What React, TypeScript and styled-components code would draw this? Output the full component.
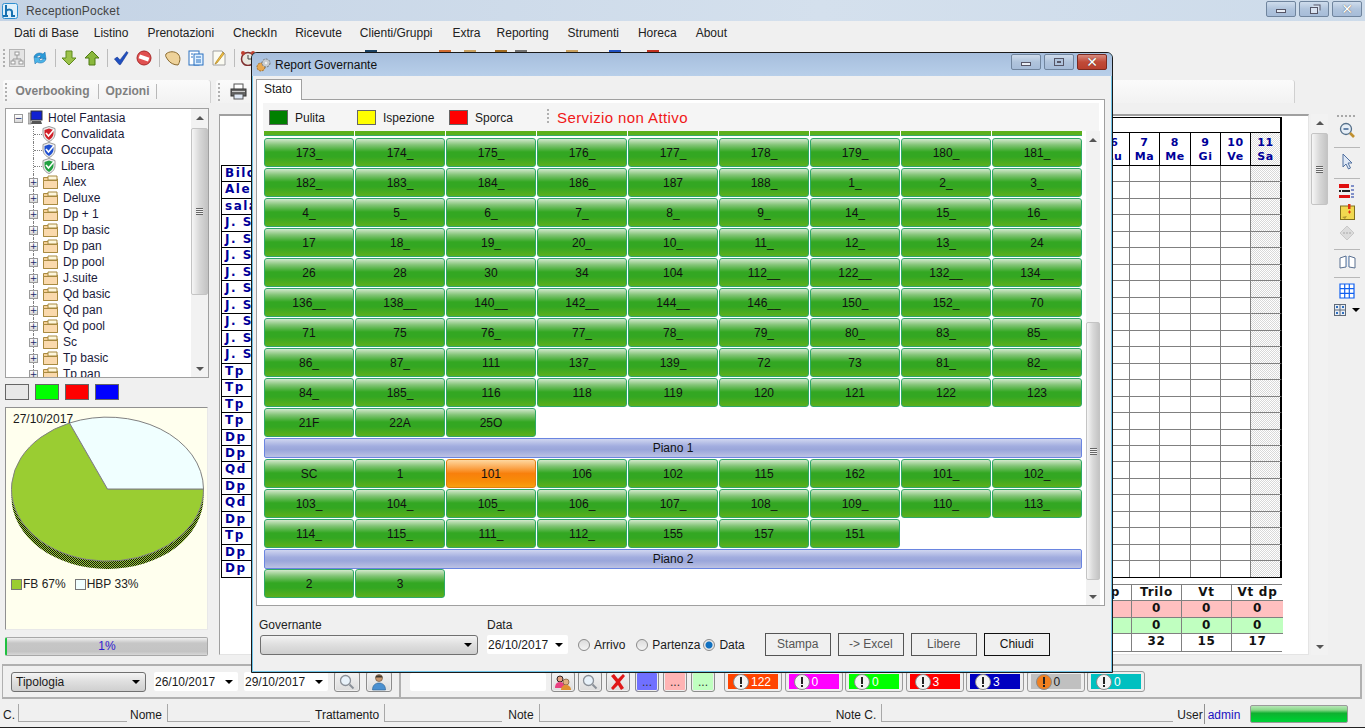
import styled, { createGlobalStyle } from 'styled-components';

const GlobalStyle = createGlobalStyle`
  html, body {
    margin: 0;
    padding: 0;
    overflow: hidden;
    background: #f0f0f0;
  }
  * {
    box-sizing: border-box;
  }
`;

const MENU = [
  { label: 'Dati di Base', trim: 4 },
  { label: 'Listino', trim: 0 },
  { label: 'Prenotazioni', trim: 0 },
  { label: 'CheckIn', trim: 1 },
  { label: 'Ricevute', trim: 1 },
  { label: 'Clienti/Gruppi', trim: -1 },
  { label: 'Extra', trim: 3 },
  { label: 'Reporting', trim: 0 },
  { label: 'Strumenti', trim: 0 },
  { label: 'Horeca', trim: 0 },
  { label: 'About', trim: 0 },
];
const FOLDERS = ['Alex', 'Deluxe', 'Dp + 1', 'Dp basic', 'Dp pan', 'Dp pool', 'J.suite', 'Qd basic', 'Qd pan', 'Qd pool', 'Sc', 'Tp basic', 'Tp pan'];
const NAMES = ['Bilo', 'Alex', 'sala', 'J. S', 'J. S', 'J. S', 'J. S', 'J. S', 'J. S', 'J. S', 'J. S', 'J. S', 'Tp', 'Tp', 'Tp', 'Tp', 'Dp', 'Dp', 'Qd', 'Dp', 'Qd', 'Dp', 'Tp', 'Dp', 'Dp'];
const DAYS = [['6', 'Lu'], ['7', 'Ma'], ['8', 'Me'], ['9', 'Gi'], ['10', 'Ve'], ['11', 'Sa']];
const HIDDEN_TOOLS = [
  { gap: 102, color: '#1a4060' },
  { gap: 55, color: '#d06a30' },
  { gap: 6, color: '#c8a060' },
  { gap: 12, color: '#a06a20' },
  { gap: 1, color: '#707070' },
  { gap: 32, color: '#c8a060' },
  { gap: 24, color: '#2050c0' },
  { gap: 19, color: '#c03020' },
];
const BADGES = [
  { color: '#ff4500', text: '#fff', label: '122' },
  { color: '#ff00ff', text: '#fff', label: '0' },
  { color: '#00ff00', text: '#fff', label: '0' },
  { color: '#ff0000', text: '#fff', label: '3' },
  { color: '#0000c0', text: '#fff', label: '3' },
  { color: '#c0c0c0', text: '#222', label: '0', warn: true },
  { color: '#00c0c0', text: '#fff', label: '0' },
];

type RoomRow = { floor: string } | { rooms: string[] };

const ROOM_ROWS: RoomRow[] = [
  { rooms: '173_ 174_ 175_ 176_ 177_ 178_ 179_ 180_ 181_'.split(' ') },
  { rooms: '182_ 183_ 184_ 186_ 187 188_ 1_ 2_ 3_'.split(' ') },
  { rooms: '4_ 5_ 6_ 7_ 8_ 9_ 14_ 15_ 16_'.split(' ') },
  { rooms: '17 18_ 19_ 20_ 10_ 11_ 12_ 13_ 24'.split(' ') },
  { rooms: '26 28 30 34 104 112__ 122__ 132__ 134__'.split(' ') },
  { rooms: '136__ 138__ 140__ 142__ 144__ 146__ 150_ 152_ 70'.split(' ') },
  { rooms: '71 75 76_ 77_ 78_ 79_ 80_ 83_ 85_'.split(' ') },
  { rooms: '86_ 87_ 111 137_ 139_ 72 73 81_ 82_'.split(' ') },
  { rooms: '84_ 185_ 116 118 119 120 121 122 123'.split(' ') },
  { rooms: '21F 22A 25O'.split(' ') },
  { floor: 'Piano 1' },
  { rooms: 'SC 1 101 106 102 115 162 101_ 102_'.split(' ') },
  { rooms: '103_ 104_ 105_ 106_ 107_ 108_ 109_ 110_ 113_'.split(' ') },
  { rooms: '114_ 115_ 111_ 112_ 155 157 151'.split(' ') },
  { floor: 'Piano 2' },
  { rooms: ['2', '3'] },
];

// ---- drawn icons ----

const Logo = () => (
  <svg width="16" height="16" viewBox="0 0 16 16">
    <rect x="0.5" y="0.5" width="15" height="15" rx="2" fill="#dff0fb" stroke="#2f8fd0" />
    <path d="M4 2v11M1 13h5M4 8c2-2 6-2 6 1v4h3" fill="none" stroke="#1670b0" strokeWidth="2" />
  </svg>
);

const NetIcon = () => (
  <svg width="16" height="18" viewBox="0 0 16 18">
    <rect x="0.5" y="0.5" width="15" height="17" fill="#e4e4e4" stroke="#b4b4b4" />
    <path d="M8 6v4M4 13v-3h8v3" fill="none" stroke="#999" />
    <rect x="6" y="3" width="4" height="3" fill="#fff" stroke="#999" />
    <rect x="2" y="12" width="4" height="3" fill="#fff" stroke="#999" />
    <rect x="10" y="12" width="4" height="3" fill="#fff" stroke="#999" />
  </svg>
);

const RefreshIcon = () => (
  <svg width="16" height="18" viewBox="0 0 16 18">
    <path d="M2 8c1-4 6-5 9-3l2-2 1 7-7-1 2-2c-2-1-4 0-5 2z" fill="#2a9ad8" stroke="#1a6aa8" strokeWidth="0.5" />
    <path d="M14 10c-1 4-6 5-9 3l-2 2-1-7 7 1-2 2c2 1 4 0 5-2z" fill="#4ab4e8" stroke="#1a6aa8" strokeWidth="0.5" />
  </svg>
);

const DownIcon = () => (
  <svg width="16" height="16" viewBox="0 0 16 16">
    <path d="M5 1h6v7h4l-7 7-7-7h4z" fill="#9cc24a" stroke="#5f8a1c" />
  </svg>
);

const UpIcon = () => (
  <svg width="16" height="16" viewBox="0 0 16 16">
    <path d="M8 1l7 7h-4v7H5V8H1z" fill="#8ab83c" stroke="#4f7a14" />
  </svg>
);

const CheckIcon = () => (
  <svg width="17" height="16" viewBox="0 0 17 16">
    <path d="M1.5 9l3-2 3 3 7-9 1.500 1.500L8 15H6.500z" fill="#1f4fc0" stroke="#123088" strokeWidth="0.6" />
  </svg>
);

const NoIcon = () => (
  <svg width="16" height="16" viewBox="0 0 16 16">
    <circle cx="8" cy="8" r="7" fill="#e05050" stroke="#a82828" />
    <rect x="3" y="6" width="10" height="4" fill="#fff" transform="rotate(20 8 8)" />
  </svg>
);

const LeafIcon = () => (
  <svg width="16" height="16" viewBox="0 0 16 16">
    <path d="M1 4c3-3 9-3 12 0s2 8 0 11c-4 0-8-2-10-5S0 6 1 4z" fill="#eed29a" stroke="#8a6a30" />
  </svg>
);

const DocsIcon = () => (
  <svg width="16" height="16" viewBox="0 0 16 16">
    <rect x="1" y="1" width="10" height="14" fill="#fff" stroke="#2a70c0" />
    <rect x="6" y="4" width="9" height="11" fill="#dff0ff" stroke="#2a70c0" />
    <path d="M3 4h2M3 7h2M8 7h5M8 10h5M8 12h5" stroke="#2a70c0" />
  </svg>
);

const NoteIcon = () => (
  <svg width="16" height="16" viewBox="0 0 16 16">
    <path d="M2 1h9l3 3v11H2z" fill="#fbfbf2" stroke="#a0a0a0" />
    <path d="M12 2L5 12l-1 2 2-1L13 4z" fill="#f0c040" stroke="#a07010" strokeWidth="0.6" />
  </svg>
);

const ClockIcon = () => (
  <svg width="16" height="16" viewBox="0 0 16 16">
    <circle cx="8" cy="9" r="6.500" fill="#e8e8e0" stroke="#803030" strokeWidth="1.5" />
    <path d="M8 5v4h3" fill="none" stroke="#444" />
    <circle cx="3" cy="3" r="2" fill="#c04030" />
    <circle cx="13" cy="3" r="2" fill="#c04030" />
  </svg>
);

const PrintIcon = () => (
  <svg width="17" height="17" viewBox="0 0 17 17">
    <rect x="4" y="1" width="9" height="6" fill="#fff" stroke="#555" />
    <rect x="1" y="6" width="15" height="7" fill="#666" stroke="#333" />
    <rect x="4" y="11" width="9" height="5" fill="#dfe8f5" stroke="#555" />
    <rect x="2" y="8" width="13" height="1" fill="#ccc" />
  </svg>
);

const MagnifierIcon = () => (
  <svg width="16" height="16" viewBox="0 0 16 16">
    <circle cx="6.500" cy="6.500" r="5" fill="#e8f2fa" stroke="#8a9098" strokeWidth="1.3" />
    <path d="M10.500 10.500l4 4" stroke="#8a9098" strokeWidth="2" />
  </svg>
);

const ZoomOutIcon = () => (
  <svg width="17" height="17" viewBox="0 0 17 17">
    <circle cx="7" cy="7" r="5.500" fill="#e6eef6" stroke="#55708a" strokeWidth="1.3" />
    <path d="M4.500 7h5" stroke="#3a6090" strokeWidth="1.5" />
    <path d="M11 11l4 4" stroke="#c09030" strokeWidth="2.6" />
  </svg>
);

const PointerIcon = () => (
  <svg width="16" height="17" viewBox="0 0 16 17">
    <path d="M4 1l9 9H9l2.500 5-2 1-2.500-5-3 3z" fill="#dfe8f5" stroke="#5070a0" />
  </svg>
);

const ListIcon = () => (
  <svg width="16" height="15" viewBox="0 0 16 15">
    <rect x="0" y="0" width="10" height="4" fill="#e01010" />
    <rect x="0" y="6" width="2" height="2" fill="#222" />
    <rect x="3" y="6" width="8" height="2" fill="#222" />
    <rect x="0" y="11" width="11" height="3" fill="#e01010" />
    <path d="M12 2h3M12 6h3M12 10h3M12 13h3" stroke="#1030a0" />
  </svg>
);

const StickyIcon = () => (
  <svg width="15" height="16" viewBox="0 0 15 16">
    <rect x="0.5" y="2" width="14" height="13.500" fill="#f0d850" stroke="#807020" />
    <path d="M2 13l5-1-2 3z" fill="#b09830" />
    <rect x="8" y="0" width="2.500" height="5" fill="#e03010" />
    <path d="M8 8h3M9.500 6.500v3" stroke="#e03010" />
  </svg>
);

const DiamondIcon = () => (
  <svg width="16" height="16" viewBox="0 0 16 16">
    <path d="M8 1l7 7-7 7-7-7z" fill="#dcdcdc" stroke="#c8c8c8" />
    <path d="M4 8h8" stroke="#a8a8a8" strokeDasharray="2 1" />
  </svg>
);

const BookIcon = () => (
  <svg width="17" height="14" viewBox="0 0 17 14">
    <path d="M1 3l6-2v11l-6 1zM10 1l6 2v10l-6-1z" fill="#fff" stroke="#5a7090" />
    <path d="M7 1h1v11H7zM9 1h1v11H9z" fill="#90a8c8" />
  </svg>
);

const BlueGridIcon = () => (
  <svg width="16" height="16" viewBox="0 0 16 16">
    <path d="M1 1h14v14H1zM1 5.700h14M1 10.300h14M5.700 1v14M10.300 1v14" fill="#fff" stroke="#1060f0" strokeWidth="1.2" />
  </svg>
);

const SmallGridIcon = () => (
  <svg width="12" height="12" viewBox="0 0 12 12">
    <rect x="0.5" y="0.5" width="11" height="11" fill="#e8eef6" stroke="#606a78" />
    <path d="M6 0v12M0 6h12" stroke="#606a78" />
    <rect x="2" y="2" width="2" height="2" fill="#3070c0" />
    <rect x="8" y="2" width="2" height="2" fill="#3070c0" />
    <rect x="2" y="8" width="2" height="2" fill="#3070c0" />
    <rect x="8" y="8" width="2" height="2" fill="#3070c0" />
  </svg>
);

const ShieldIcon = ({ color }: { color: string }) => (
  <svg width="14" height="16" viewBox="0 0 14 16">
    <path d="M7 .5l6 2v5c0 4-3 7-6 8-3-1-6-4-6-8v-5z" fill="#eee" stroke="#999" />
    <path d="M7 2.500l4.500 1.500v3.500c0 3-2 5-4.500 6.500-2.500-1.500-4.500-3.500-4.500-6.500V4z" fill={color} />
    <path d="M4 7l2.500 3L12 3.500" fill="none" stroke="#fff" strokeWidth="1.600" />
  </svg>
);

const FolderIcon = () => (
  <svg width="15" height="14" viewBox="0 0 15 14">
    <path d="M.5 2.500h5l1 1.500h8v9.500H.5z" fill="#f6cf96" stroke="#a88a40" />
    <path d="M5 1h9v4H5z" fill="#fdf6dc" stroke="#a88a40" />
    <path d="M.5 5.500h14v8H.5z" fill="#fad9ac" stroke="#a88a40" />
  </svg>
);

const MonitorIcon = () => (
  <svg width="15" height="16" viewBox="0 0 15 16">
    <rect x="0" y="3" width="3" height="11" fill="#c0c0c0" stroke="#707070" strokeWidth="0.6" />
    <rect x="3" y="1" width="11" height="9" fill="#1020d0" stroke="#333" />
    <path d="M4 11h9l1 3H3z" fill="#555" />
  </svg>
);

const GearsIcon = () => (
  <svg width="15" height="14" viewBox="0 0 15 14">
    <circle cx="5" cy="9" r="4" fill="#e8a850" stroke="#a07030" strokeDasharray="2 1" />
    <circle cx="10" cy="5" r="4" fill="#c8ccd0" stroke="#707880" strokeDasharray="2 1" />
    <circle cx="10" cy="5" r="1.200" fill="#f0f0f0" />
  </svg>
);

const PersonIcon = () => (
  <svg width="16" height="18" viewBox="0 0 16 18">
    <circle cx="8" cy="5" r="3.500" fill="#c89870" stroke="#604830" strokeWidth="0.6" />
    <path d="M4.500 4.500c0-3 7-3 7 0z" fill="#40382c" />
    <path d="M1.500 17c0-5 3-7 6.500-7s6.500 2 6.500 7z" fill="#4a90d0" stroke="#2a6090" strokeWidth="0.6" />
  </svg>
);

const PeopleIcon = () => (
  <svg width="18" height="18" viewBox="0 0 18 18">
    <circle cx="6" cy="6" r="3" fill="#e0a080" stroke="#302020" />
    <path d="M1 15c0-4 2-6 5-6s5 2 5 6z" fill="#e84080" />
    <circle cx="12" cy="9" r="3" fill="#e0b080" stroke="#604020" strokeWidth="0.6" />
    <path d="M7 17c0-3 2-5 5-5s5 2 5 5z" fill="#e09030" />
  </svg>
);

const CrossIcon = () => (
  <svg width="18" height="18" viewBox="0 0 18 18">
    <path d="M2 3l3-2 4 5 5-5 2 2-5 6 4 6-3 2-3-5-5 5-2-2 5-6z" fill="#e01818" />
  </svg>
);

const AlertIcon = ({ warn }: { warn?: boolean }) => (
  <svg width="16" height="16" viewBox="0 0 16 16">
    <circle cx="8" cy="8" r="7.500" fill={warn ? '#f08020' : '#f4f4f4'} stroke="#8a8a8a" />
    <rect x="7" y="3" width="2" height="7" fill="#222" />
    <rect x="7" y="11" width="2" height="2" fill="#222" />
  </svg>
);

const Caret = styled.span`
  width: 0;
  height: 0;
  border-left: 4px solid transparent;
  border-right: 4px solid transparent;
  border-top: 4px solid #000;
  flex: none;
`;

// ---- window frame ----

const Page = styled.div`
  position: relative;
  width: 1365px;
  height: 728px;
  overflow: hidden;
  display: flex;
  flex-direction: column;
  background: #f0f0f0;
  color: #1a1a1a;
  font: 12px 'Liberation Sans', Arial, sans-serif;
`;

const TitleBar = styled.div`
  height: 21px;
  flex: none;
  display: flex;
  align-items: center;
  padding: 0 3px 0 2px;
  background: linear-gradient(90deg, #c4d3e5 0%, #d4e0ed 60%, #cddbea 100%);
`;

const AppTitle = styled.span`
  margin-left: 8px;
  font-size: 12px;
  color: #444;
  letter-spacing: 0.2px;
  flex: 1;
`;

const WindowButtons = styled.div`
  display: flex;
  gap: 3px;
  align-self: flex-start;
  margin-top: 1px;
`;

const WindowButton = styled.div<{ $close?: boolean }>`
  width: 30px;
  height: 16px;
  border-radius: 2px;
  border: 1px solid ${(p) => (p.$close ? '#7a2a20' : '#70859e')};
  background: ${(p) =>
    p.$close ? 'linear-gradient(#d88a7e, #c04a38 50%, #b8402e)' : 'linear-gradient(#cfdcec, #b0c4dc 50%, #a6bcd8)'};
  display: flex;
  align-items: center;
  justify-content: center;
`;

const MinGlyph = styled.span`
  width: 10px;
  height: 4px;
  margin-top: 4px;
  background: #e8eef6;
  border: 1px solid #556;
`;

const MaxGlyph = styled.span`
  width: 10px;
  height: 8px;
  background: #c0d0e4;
  border: 1px solid #556;
  box-shadow: inset 0 0 0 2px #b0c4dc, inset 0 0 0 3px #556;
`;

const RestoreGlyph = styled.span`
  width: 8px;
  height: 7px;
  margin-top: 2px;
  background: #d8e2f0;
  border: 1px solid #556;
  box-shadow: 2px -2px 0 -0.5px #d8e2f0, 3px -3px 0 -0.5px #556;
`;

const CloseGlyph = styled.span`
  color: #fff;
  font: bold 14px/14px 'DejaVu Sans', sans-serif;
  text-shadow: 0 0 1px #333;
`;

const MenuBar = styled.nav`
  height: 24px;
  flex: none;
  display: flex;
  align-items: center;
  padding-left: 14px;
  gap: 19px;
  font-size: 12px;
`;

const MenuItem = styled.span<{ $trim: number }>`
  color: #222;
  margin-right: ${(p) => -p.$trim}px;
`;

const Toolbar = styled.div`
  height: 25px;
  flex: none;
  display: flex;
  align-items: center;
  gap: 7px;
  padding-left: 3px;
`;

const Grip = styled.span`
  width: 2px;
  height: 18px;
  flex: none;
  background: repeating-linear-gradient(#b0b0b0 0 2px, transparent 2px 4px);
`;

const ToolbarGrip = styled(Grip)`
  margin-right: -3px;
`;

const ToolIcon = styled.span`
  width: 16px;
  height: 18px;
  flex: none;
  display: flex;
  align-items: center;
  justify-content: center;
`;

const ToolSeparator = styled.span`
  width: 1px;
  height: 18px;
  flex: none;
  background: #bcbcbc;
  margin-right: -2px;
`;

const ToolChip = styled.span<{ $gap: number; $color: string }>`
  width: 12px;
  height: 16px;
  flex: none;
  margin-left: ${(p) => p.$gap}px;
  background: ${(p) => p.$color};
`;

const MainRow = styled.div`
  flex: none;
  height: 576px;
  margin-top: 10px;
  display: flex;
`;

// ---- left column ----

const LeftColumn = styled.aside`
  width: 216px;
  flex: none;
  padding-left: 3px;
  display: flex;
  flex-direction: column;
`;

const Strip = styled.div<{ $width: number }>`
  width: ${(p) => p.$width}px;
  height: 23px;
  flex: none;
  border-radius: 3px 3px 0 0;
  background: linear-gradient(#fbfbfb, #f2f2f2);
  border-right: 1px solid #d0d0d0;
  display: flex;
  align-items: center;
  padding-left: 2px;
`;

const StripTab = styled.span<{ $width: number }>`
  width: ${(p) => p.$width}px;
  height: 15px;
  line-height: 15px;
  border-right: 1px solid #b8b8b8;
  text-align: center;
  font-weight: bold;
  color: #808080;
`;

const TreeBox = styled.div`
  margin: 5px 0 0 2px;
  width: 204px;
  height: 270px;
  flex: none;
  display: flex;
  background: #fff;
  border: 1px solid #a0a0a0;
`;

const TreeList = styled.div`
  flex: 1;
  overflow: hidden;
  padding-top: 1px;
`;

const TreeRow = styled.div<{ $indent: number; $line?: boolean }>`
  position: relative;
  height: 16px;
  flex: none;
  display: flex;
  align-items: center;
  gap: 5px;
  padding-left: ${(p) => p.$indent}px;
  &::before {
    content: '';
    display: ${(p) => (p.$line ? 'block' : 'none')};
    position: absolute;
    left: 27px;
    top: 0;
    height: 16px;
    border-left: 1px dotted #808080;
  }
`;

const TreeLabel = styled.span`
  color: #1a1a3a;
`;

const Expander = styled.span`
  position: relative;
  z-index: 1;
  width: 9px;
  height: 9px;
  flex: none;
  border: 1px solid #9a9a9a;
  background: linear-gradient(#fff, #d8d8d8);
  display: flex;
  align-items: center;
  justify-content: center;
  font: 9px/7px 'DejaVu Sans', sans-serif;
  color: #1a2a6a;
`;

const TreeLeader = styled.span`
  width: 8px;
  margin-right: -5px;
  border-top: 1px dotted #808080;
  flex: none;
`;

const Swatches = styled.div`
  display: flex;
  gap: 6px;
  margin: 6px 0 0 2px;
`;

const Swatch = styled.span<{ $color: string }>`
  width: 24px;
  height: 16px;
  border: 1px solid #666;
  background: ${(p) => p.$color};
`;

const ChartBox = styled.div`
  position: relative;
  margin: 7px 0 0 2px;
  width: 203px;
  height: 223px;
  flex: none;
  background: #ffffee;
  border: 1px solid;
  border-color: #909090 #e8e8e8 #e8e8e8 #909090;
`;

const ChartDate = styled.span`
  position: absolute;
  left: 7px;
  top: 4px;
`;

const ChartSvg = styled.svg`
  display: block;
`;

const ChartLegend = styled.div`
  display: flex;
  align-items: center;
  margin: -1px 0 0 5px;
  color: #222;
`;

const LegendSwatch = styled.span<{ $color: string }>`
  width: 11px;
  height: 11px;
  margin-right: 1px;
  border: 1px solid #777;
  background: ${(p) => p.$color};
`;

const LegendText = styled.span`
  margin-right: 9px;
`;

const Progress = styled.div`
  position: relative;
  margin: 7px 0 0 2px;
  width: 203px;
  height: 19px;
  flex: none;
  border: 1px solid #a8a8a8;
  border-left: 2px solid #20c040;
  border-radius: 2px;
  background: linear-gradient(#f0f0f0, #c6c6c6 30%, #c4c4c4 80%, #d8d8d8);
  color: #3020d0;
  text-align: center;
  line-height: 17px;
`;

// ---- centre ----

const CenterColumn = styled.main`
  width: 1112px;
  flex: none;
  display: flex;
  flex-direction: column;
`;

const PrintIconSlot = styled.span`
  display: flex;
  align-items: center;
  margin-left: 10px;
`;

const ContentFrame = styled.div`
  margin: 11px 0 0 3px;
  height: 541px;
  flex: none;
  display: flex;
  gap: 2px;
`;

const SheetPanel = styled.div`
  flex: 1;
  background: #fff;
  border: 1px solid;
  border-width: 2px 1px 1px 1px;
  border-color: #a0a0a0 #e4e4e4 #e4e4e4 #a0a0a0;
  padding: 1px 0 0 1px;
`;

const SheetGrid = styled.div`
  width: 1061px;
  display: grid;
  grid-template-columns: 1fr 30px 30px 31px 30px 30px 31px;
  grid-template-rows: 16px 33px repeat(25, 16.48px);
  font: bold 11px 'DejaVu Sans', sans-serif;
  letter-spacing: 0.6px;
  color: #000099;
`;

const CornerCell = styled.div`
  grid-row: 1 / 3;
  border-bottom: 1px solid #000;
`;

const BandCell = styled.div`
  grid-column: 2 / -1;
  border: 1px solid #000;
  border-right: 2px solid #000;
`;

const DayHead = styled.div<{ $weekend?: boolean; $last?: boolean }>`
  border-right: 1px solid #000;
  border-right-width: ${(p) => (p.$last ? 2 : 1)}px;
  border-bottom: 1px solid #000;
  text-align: center;
  line-height: 14px;
  padding-top: 3px;
  background: ${(p) => (p.$weekend ? 'repeating-conic-gradient(#dcdcdc 0 25%, #fff 0 50%) 0 0 / 2px 2px' : '#fff')};
`;

const NameCell = styled.div`
  border: 1px solid #000;
  border-top: 0;
  padding-left: 3px;
  font-size: 12px;
  letter-spacing: 1.5px;
  line-height: 15px;
  white-space: nowrap;
`;

const DayCell = styled.div<{ $weekend?: boolean; $last?: boolean }>`
  border-right: ${(p) => (p.$last ? '2px solid #000' : '1px solid #808080')};
  border-bottom: 1px solid #808080;
  background: ${(p) => (p.$weekend ? 'repeating-conic-gradient(#d8d8d8 0 25%, #fff 0 50%) 0 0 / 2px 2px' : '#fff')};
`;

const SheetClose = styled.div`
  width: 1061px;
  height: 1px;
  margin-top: -1px;
  background: #000;
  position: relative;
`;

const Summary = styled.div`
  width: 241px;
  margin: 6px 0 0 820px;
  display: grid;
  grid-template-columns: 90px 50px 50px 51px;
  grid-auto-rows: 16.500px;
  border: 1px solid #808080;
  font: bold 12px 'DejaVu Sans', sans-serif;
  letter-spacing: 0.7px;
  color: #111;
`;

const SummaryCell = styled.div<{ $bg?: string }>`
  background: ${(p) => p.$bg || '#fff'};
  border-right: 1px solid #808080;
  border-bottom: 1px solid #808080;
  text-align: center;
  line-height: 15px;
  &:first-child {
    text-align: right;
    padding-right: 11px;
  }
  &:nth-child(4n) {
    border-right: 0;
  }
  &:nth-last-child(-n + 4) {
    border-bottom: 0;
  }
`;

const ScrollTrack = styled.div<{ $width: number }>`
  width: ${(p) => p.$width}px;
  flex: none;
  display: flex;
  flex-direction: column;
  align-items: stretch;
  background: #f2f2f2;
`;

const ScrollArrow = styled.div<{ $down?: boolean }>`
  height: 17px;
  flex: none;
  display: flex;
  align-items: center;
  justify-content: center;
  &::after {
    content: '';
    width: 0;
    height: 0;
    border-left: 4px solid transparent;
    border-right: 4px solid transparent;
    ${(p) => (p.$down ? 'border-top: 4px solid #555;' : 'border-bottom: 4px solid #555;')}
  }
`;

const ScrollThumb = styled.div<{ $offset: number; $height: number }>`
  margin-top: ${(p) => p.$offset}px;
  height: ${(p) => p.$height}px;
  flex: none;
  border: 1px solid #c4c4c4;
  border-radius: 2px;
  background: linear-gradient(90deg, #f6f6f6, #d8d8d8 50%, #c4c4c4);
  display: flex;
  align-items: center;
  justify-content: center;
  &::after {
    content: '';
    width: 7px;
    height: 7px;
    background: repeating-linear-gradient(#666 0 1px, #f0f0f0 1px 2px);
  }
`;

const ScrollFill = styled.div`
  flex: 1;
`;

const Scrollbar = ({ width, offset, height }: { width: number; offset: number; height: number }) => (
  <ScrollTrack $width={width}>
    <ScrollArrow />
    <ScrollThumb $offset={offset} $height={height} />
    <ScrollFill />
    <ScrollArrow $down />
  </ScrollTrack>
);

// ---- right toolbar ----

const SideBar = styled.div`
  margin: 35px 0 0 4px;
  width: 30px;
  flex: none;
  display: flex;
  flex-direction: column;
  align-items: center;
  gap: 5px;
`;

const SideDots = styled.span`
  width: 20px;
  height: 2px;
  background: repeating-linear-gradient(90deg, #a8a8a8 0 2px, transparent 2px 4px);
`;

const SideSlot = styled.span`
  display: flex;
  align-items: center;
  gap: 6px;
`;

const SideSeparator = styled.span`
  width: 26px;
  height: 1px;
  margin-top: 3px;
  background: #b8b8b8;
`;

// ---- bottom bars ----

const BottomBar = styled.div`
  margin: 8px 3px 0 2px;
  height: 35px;
  flex: none;
  display: flex;
  border: 1px solid #b0b0b0;
  border-width: 2px 2px 2px 1px;
`;

const BottomGroup = styled.div`
  width: 398px;
  flex: none;
  display: flex;
  align-items: center;
  padding-left: 8px;
  border-right: 2px solid #b0b0b0;
`;

const BottomTools = styled.div`
  display: flex;
  align-items: center;
  padding-left: 9px;
`;

const SelectBox = styled.div<{ $width: number }>`
  width: ${(p) => p.$width}px;
  height: 20px;
  flex: none;
  border: 1px solid #707070;
  border-radius: 3px;
  background: linear-gradient(#f4f4f4, #e0e0e0 45%, #cfcfcf);
  display: flex;
  align-items: center;
  justify-content: space-between;
  padding: 0 5px 0 4px;
`;

const DateBox = styled.div<{ $width: number; $left?: number }>`
  width: ${(p) => p.$width}px;
  height: 19px;
  flex: none;
  margin-left: ${(p) => p.$left || 0}px;
  background: #fff;
  border-radius: 2px;
  display: flex;
  align-items: center;
  justify-content: space-between;
  padding: 0 5px 0 1px;
`;

const IconButton = styled.div<{ $left: number; $fill?: string; $width?: number }>`
  width: ${(p) => p.$width || 24}px;
  height: 21px;
  flex: none;
  margin-left: ${(p) => p.$left}px;
  border: 1px solid #8c8c8c;
  border-radius: 3px;
  background: ${(p) => p.$fill || 'linear-gradient(#f4f4f4, #dcdcdc)'};
  display: flex;
  align-items: center;
  justify-content: center;
  color: #333;
  line-height: 14px;
  box-shadow: inset 0 0 0 1px #eee;
`;

const SearchField = styled.div`
  width: 136px;
  height: 18px;
  flex: none;
  background: #fff;
  border-radius: 2px;
`;

const BadgeRow = styled.div`
  display: flex;
  gap: 2.5px;
  margin-left: 9px;
`;

const Badge = styled.div`
  width: 58px;
  height: 21px;
  flex: none;
  border: 1px solid #9a9a9a;
  border-radius: 3px;
  background: #eee;
  padding: 2px 3px;
`;

const BadgeFill = styled.div<{ $color: string; $text: string }>`
  height: 100%;
  display: flex;
  align-items: center;
  gap: 2px;
  padding-left: 5px;
  background: ${(p) => p.$color};
  color: ${(p) => p.$text};
`;

const StatusBar = styled.footer`
  flex: 1;
  display: flex;
  align-items: flex-start;
  padding: 5px 0 0 3px;
  border-bottom: 1px solid #222;
`;

const StatusLabel = styled.span<{ $left?: number }>`
  margin-left: ${(p) => p.$left || 0}px;
  line-height: 22px;
  flex: none;
`;

const StatusField = styled.span<{ $width: number; $left: number }>`
  width: ${(p) => p.$width}px;
  height: 18px;
  margin-left: ${(p) => p.$left}px;
  flex: none;
  border-left: 1px solid #a8a8a8;
  border-bottom: 1px solid #a8a8a8;
`;

const UserName = styled.span`
  margin-left: 1px;
  padding-left: 3px;
  border-left: 1px solid #909090;
  line-height: 22px;
  color: #2010c0;
  height: 20px;
  flex: none;
`;

const OnlineBar = styled.div`
  margin: 1px 0 0 10px;
  width: 98px;
  height: 18px;
  flex: none;
  border: 1px solid #9a9a9a;
  border-radius: 2px;
  background: linear-gradient(#b6e6b6, #88d888 25%, #10b030 45%, #00c830 80%, #00d038);
`;

// ---- modal window ----

const ReportWindow = styled.section`
  position: absolute;
  left: 251px;
  top: 52px;
  width: 862px;
  height: 621px;
  display: flex;
  flex-direction: column;
  border: 1px solid #1a1a1a;
  border-radius: 6px 6px 0 0;
  background: #6fc4e8;
`;

const ReportTitle = styled.header`
  height: 23px;
  flex: none;
  display: flex;
  align-items: center;
  gap: 4px;
  padding: 0 5px 0 4px;
  border-radius: 5px 5px 0 0;
  background: linear-gradient(#a6bedd, #b8cfe9);
  font-size: 12px;
  color: #111;
`;

const ReportTitleText = styled.span`
  flex: 1;
`;

const ReportBody = styled.div`
  flex: 1;
  margin: 0 1px 1px;
  background: #f0f0f0;
  display: flex;
  flex-direction: column;
  padding: 3px 6px 0 3px;
  min-height: 0;
`;

const TabHead = styled.div`
  width: 46px;
  height: 21px;
  flex: none;
  background: #fff;
  border: 1px solid #a0a0a0;
  border-bottom: 0;
  padding-left: 7px;
  line-height: 19px;
  position: relative;
  margin-bottom: -1px;
  z-index: 1;
`;

const TabPanel = styled.div`
  height: 507px;
  flex: none;
  background: #fff;
  border: 1px solid #a0a0a0;
  padding: 3px 5px 0 6px;
  display: flex;
  flex-direction: column;
`;

const LegendStrip = styled.div`
  height: 28px;
  flex: none;
  display: flex;
  align-items: center;
  padding-left: 6px;
  background: #f5f5f5;
`;

const LegendBox = styled.span<{ $color: string }>`
  width: 19px;
  height: 15px;
  flex: none;
  border: 1px solid #666;
  background: ${(p) => p.$color};
`;

const LegendName = styled.span<{ $width: number }>`
  width: ${(p) => p.$width}px;
  margin-left: 7px;
  padding-top: 2px;
  font-size: 12px;
  flex: none;
`;

const LegendGrip = styled(Grip)`
  margin: 0 8px 0 0;
  height: 16px;
`;

const OffMessage = styled.span`
  font-size: 15px;
  color: #f01818;
  letter-spacing: 0.4px;
`;

const RoomArea = styled.div`
  flex: 1;
  min-height: 0;
  display: flex;
  gap: 2px;
`;

const RoomGrid = styled.div`
  width: 820px;
  margin-left: 1px;
  flex: none;
  overflow: hidden;
  display: grid;
  grid-template-columns: repeat(9, 91px);
  grid-template-rows: 7px repeat(10, 30px) 21px repeat(3, 30px) 20px 30px;
  align-content: start;
`;

const PartialRow = styled.div`
  grid-column: 1 / -1;
  height: 6px;
  display: flex;
  gap: 1px;
`;

const PartialRoom = styled.span`
  width: 90px;
  height: 5px;
  background: #5cb01c;
  border-bottom: 1px solid #3aa86a;
`;

const RoomButton = styled.div<{ $active?: boolean }>`
  margin: 0 1px 1px 0;
  border: 1px solid ${(p) => (p.$active ? '#e08010' : '#2fa868')};
  border-radius: 3px;
  background: ${(p) =>
    p.$active
      ? 'linear-gradient(#ffd8a0, #fba850 28%, #f8800c 50%, #f88c08 78%, #f8a010)'
      : 'linear-gradient(#d2e8cc, #82c476 22%, #33a722 48%, #33a722 66%, #5cb01c)'};
  color: #111;
  text-align: center;
  line-height: 28px;
  font-size: 12px;
`;

const FloorBar = styled.div`
  grid-column: 1 / -1;
  margin-right: 1px;
  height: 20px;
  border: 1px solid #6a85e0;
  border-radius: 2px;
  background: linear-gradient(#d0d6f0, #a2addf 40%, #9aa6da 60%, #bcc2e4);
  text-align: center;
  line-height: 19px;
  color: #111;
`;

const ReportFooter = styled.div`
  flex: 1;
  display: flex;
  align-items: flex-start;
  padding: 13px 0 0 3px;
`;

const FieldGroup = styled.div<{ $width: number }>`
  width: ${(p) => p.$width}px;
  flex: none;
  display: flex;
  flex-direction: column;
  gap: 3px;
`;

const GovernanteSelect = styled(SelectBox)`
  margin-left: 1px;
`;

const FieldLabel = styled.span`
  line-height: 13px;
  color: #222;
`;

const RadioRow = styled.div`
  display: flex;
  align-items: center;
  margin-top: 18px;
  height: 16px;
`;

const RadioDot = styled.span<{ $on?: boolean; $left: number }>`
  width: 12px;
  height: 12px;
  flex: none;
  margin-left: ${(p) => p.$left}px;
  margin-right: 4px;
  border-radius: 50%;
  border: 1px solid #8a8a8a;
  background: ${(p) => (p.$on ? 'radial-gradient(circle, #1070c0 0 3px, #e8e8e8 4px)' : 'linear-gradient(#dcdcdc, #f4f4f4)')};
`;

const FooterButtons = styled.div`
  display: flex;
  gap: 7px;
  margin: 14px 0 0 20px;
`;

const FooterButton = styled.div<{ $strong?: boolean }>`
  width: 66px;
  height: 23px;
  flex: none;
  border: 1px solid ${(p) => (p.$strong ? '#111' : '#555')};
  background: #f0f0f0;
  color: ${(p) => (p.$strong ? '#111' : '#555')};
  text-align: center;
  line-height: 21px;
`;

const App = () => {
  return (
    <Page>
      <GlobalStyle />

      <TitleBar>
        <Logo />
        <AppTitle>ReceptionPocket</AppTitle>
        <WindowButtons>
          <WindowButton>
            <MinGlyph />
          </WindowButton>
          <WindowButton>
            <RestoreGlyph />
          </WindowButton>
          <WindowButton>
            <CloseGlyph>✕</CloseGlyph>
          </WindowButton>
        </WindowButtons>
      </TitleBar>

      <MenuBar>
        {MENU.map((item) => (
          <MenuItem key={item.label} $trim={item.trim}>{item.label}</MenuItem>
        ))}
      </MenuBar>

      <Toolbar>
        <ToolbarGrip />
        <ToolIcon><NetIcon /></ToolIcon>
        <ToolIcon><RefreshIcon /></ToolIcon>
        <ToolSeparator />
        <ToolIcon><DownIcon /></ToolIcon>
        <ToolIcon><UpIcon /></ToolIcon>
        <ToolSeparator />
        <ToolIcon><CheckIcon /></ToolIcon>
        <ToolIcon><NoIcon /></ToolIcon>
        <ToolSeparator />
        <ToolIcon><LeafIcon /></ToolIcon>
        <ToolIcon><DocsIcon /></ToolIcon>
        <ToolIcon><NoteIcon /></ToolIcon>
        <ToolSeparator />
        <ToolIcon><ClockIcon /></ToolIcon>
        {HIDDEN_TOOLS.map((tool) => (
          <ToolChip key={tool.color + tool.gap} $gap={tool.gap} $color={tool.color} />
        ))}
      </Toolbar>

      <MainRow>
        <LeftColumn>
          <Strip $width={208}>
            <Grip />
            <StripTab $width={92}>Overbooking</StripTab>
            <StripTab $width={58}>Opzioni</StripTab>
          </Strip>

          <TreeBox>
            <TreeList>
              <TreeRow $indent={8}>
                <Expander>−</Expander>
                <MonitorIcon />
                <TreeLabel>Hotel Fantasia</TreeLabel>
              </TreeRow>
              {[
                { name: 'Convalidata', color: '#d02028' },
                { name: 'Occupata', color: '#2050d0' },
                { name: 'Libera', color: '#20a040' },
              ].map((status) => (
                <TreeRow key={status.name} $indent={28} $line>
                  <TreeLeader />
                  <ShieldIcon color={status.color} />
                  <TreeLabel>{status.name}</TreeLabel>
                </TreeRow>
              ))}
              {FOLDERS.map((folder) => (
                <TreeRow key={folder} $indent={23} $line>
                  <Expander>+</Expander>
                  <FolderIcon />
                  <TreeLabel>{folder}</TreeLabel>
                </TreeRow>
              ))}
            </TreeList>
            <Scrollbar width={17} offset={2} height={167} />
          </TreeBox>

          <Swatches>
            <Swatch $color="#e8e8e8" />
            <Swatch $color="#00ff00" />
            <Swatch $color="#ff0000" />
            <Swatch $color="#0000ff" />
          </Swatches>

          <ChartBox>
            <ChartSvg width="201" height="170" viewBox="0 0 201 170">
              <defs>
                <pattern id="pieEdge" width="2" height="2" patternUnits="userSpaceOnUse">
                  <rect width="2" height="2" fill="#9acd32" />
                  <rect width="1" height="1" fill="#111" />
                  <rect x="1" y="1" width="1" height="1" fill="#111" />
                </pattern>
              </defs>
              <path d="M5.500 81A96 72 0 0 0 197.500 81V89A96 72 0 0 1 5.500 89Z" fill="url(#pieEdge)" />
              <path d="M101.500 81L197.500 81A96 72 0 1 1 63.500 15Z" fill="#9acd32" stroke="#808080" />
              <path d="M101.500 81L63.500 15A96 72 0 0 1 197.500 81Z" fill="#f0ffff" stroke="#808080" />
            </ChartSvg>
            <ChartDate>27/10/2017</ChartDate>
            <ChartLegend>
              <LegendSwatch $color="#9acd32" />
              <LegendText>FB 67%</LegendText>
              <LegendSwatch $color="#f0ffff" />
              <LegendText>HBP 33%</LegendText>
            </ChartLegend>
          </ChartBox>

          <Progress>1%</Progress>
        </LeftColumn>

        <CenterColumn>
          <Strip $width={1079}>
            <Grip />
            <PrintIconSlot><PrintIcon /></PrintIconSlot>
          </Strip>

          <ContentFrame>
            <SheetPanel>
              <SheetGrid>
                <CornerCell />
                <BandCell />
                {DAYS.map(([num, day], i) => (
                  <DayHead key={num} $weekend={i === 5} $last={i === 5}>
                    {num}
                    <br />
                    {day}
                  </DayHead>
                ))}
                {NAMES.flatMap((name, row) => [
                  <NameCell key={`n${row}`}>{name}</NameCell>,
                  ...DAYS.map(([num], i) => <DayCell key={`${row}-${num}`} $weekend={i === 5} $last={i === 5} />),
                ])}
              </SheetGrid>
              <SheetClose />
              <Summary>
                <SummaryCell>Dp</SummaryCell>
                <SummaryCell>Trilo</SummaryCell>
                <SummaryCell>Vt</SummaryCell>
                <SummaryCell>Vt dp</SummaryCell>
                {['0', '0', '0', '0'].map((v, i) => (
                  <SummaryCell key={`a${i}`} $bg="#ffc0c0">{v}</SummaryCell>
                ))}
                {['0', '0', '0', '0'].map((v, i) => (
                  <SummaryCell key={`b${i}`} $bg="#c0ffc0">{v}</SummaryCell>
                ))}
                {['8', '32', '15', '17'].map((v, i) => (
                  <SummaryCell key={`c${i}`}>{v}</SummaryCell>
                ))}
              </Summary>
            </SheetPanel>
            <Scrollbar width={17} offset={2} height={72} />
          </ContentFrame>
        </CenterColumn>

        <SideBar>
          <SideDots />
          <SideSlot><ZoomOutIcon /></SideSlot>
          <SideSeparator />
          <SideSlot><PointerIcon /></SideSlot>
          <SideSeparator />
          <SideSlot><ListIcon /></SideSlot>
          <SideSlot><StickyIcon /></SideSlot>
          <SideSlot><DiamondIcon /></SideSlot>
          <SideSeparator />
          <SideSlot><BookIcon /></SideSlot>
          <SideSeparator />
          <SideSlot><BlueGridIcon /></SideSlot>
          <SideSlot>
            <SmallGridIcon />
            <Caret />
          </SideSlot>
        </SideBar>
      </MainRow>

      <BottomBar>
        <BottomGroup>
          <SelectBox $width={135}>
            Tipologia
            <Caret />
          </SelectBox>
          <DateBox $width={84} $left={8}>
            26/10/2017
            <Caret />
          </DateBox>
          <DateBox $width={84} $left={6}>
            29/10/2017
            <Caret />
          </DateBox>
          <IconButton $left={6} $width={26}><MagnifierIcon /></IconButton>
          <IconButton $left={6} $width={26}><PersonIcon /></IconButton>
        </BottomGroup>
        <BottomTools>
          <SearchField />
          <IconButton $left={5}><PeopleIcon /></IconButton>
          <IconButton $left={3}><MagnifierIcon /></IconButton>
          <IconButton $left={4}><CrossIcon /></IconButton>
          <IconButton $left={5} $fill="#7070ff">...</IconButton>
          <IconButton $left={4} $fill="#ffb4b4">...</IconButton>
          <IconButton $left={4} $fill="#c0ffc0">...</IconButton>
          <BadgeRow>
            {BADGES.map((badge) => (
              <Badge key={badge.color}>
                <BadgeFill $color={badge.color} $text={badge.text}>
                  <AlertIcon warn={badge.warn} />
                  {badge.label}
                </BadgeFill>
              </Badge>
            ))}
          </BadgeRow>
        </BottomTools>
      </BottomBar>

      <StatusBar>
        <StatusLabel>C.</StatusLabel>
        <StatusField $width={109} $left={3} />
        <StatusLabel $left={3}>Nome</StatusLabel>
        <StatusField $width={143} $left={5} />
        <StatusLabel $left={5}>Trattamento</StatusLabel>
        <StatusField $width={118} $left={5} />
        <StatusLabel $left={6}>Note</StatusLabel>
        <StatusField $width={292} $left={5} />
        <StatusLabel $left={5}>Note C.</StatusLabel>
        <StatusField $width={292} $left={5} />
        <StatusLabel $left={4}>User</StatusLabel>
        <UserName>admin</UserName>
        <OnlineBar />
      </StatusBar>

      <ReportWindow>
        <ReportTitle>
          <GearsIcon />
          <ReportTitleText>Report Governante</ReportTitleText>
          <WindowButtons>
            <WindowButton>
              <MinGlyph />
            </WindowButton>
            <WindowButton>
              <MaxGlyph />
            </WindowButton>
            <WindowButton $close>
              <CloseGlyph>✕</CloseGlyph>
            </WindowButton>
          </WindowButtons>
        </ReportTitle>

        <ReportBody>
          <TabHead>Stato</TabHead>
          <TabPanel>
            <LegendStrip>
              <LegendBox $color="#008000" />
              <LegendName $width={62}>Pulita</LegendName>
              <LegendBox $color="#ffff00" />
              <LegendName $width={66}>Ispezione</LegendName>
              <LegendBox $color="#ff0000" />
              <LegendName $width={72}>Sporca</LegendName>
              <LegendGrip />
              <OffMessage>Servizio non Attivo</OffMessage>
            </LegendStrip>
            <RoomArea>
              <RoomGrid>
                <PartialRow>
                  {Array.from({ length: 9 }, (_, i) => (
                    <PartialRoom key={i} />
                  ))}
                </PartialRow>
                {ROOM_ROWS.map((row, i) =>
                  'floor' in row ? (
                    <FloorBar key={row.floor}>{row.floor}</FloorBar>
                  ) : (
                    row.rooms.map((room, j) => (
                      <RoomButton key={`${i}-${j}`} $active={i === 11 && j === 2}>
                        {room}
                      </RoomButton>
                    ))
                  ),
                )}
              </RoomGrid>
              <Scrollbar width={14} offset={174} height={258} />
            </RoomArea>
          </TabPanel>

          <ReportFooter>
            <FieldGroup $width={228}>
              <FieldLabel>Governante</FieldLabel>
              <GovernanteSelect $width={218}>
                <span />
                <Caret />
              </GovernanteSelect>
            </FieldGroup>
            <FieldGroup $width={81}>
              <FieldLabel>Data</FieldLabel>
              <DateBox $width={81}>
                26/10/2017
                <Caret />
              </DateBox>
            </FieldGroup>
            <RadioRow>
              <RadioDot $left={10} />
              Arrivo
              <RadioDot $left={11} />
              Partenza
              <RadioDot $on $left={3} />
              Data
            </RadioRow>
            <FooterButtons>
              <FooterButton>Stampa</FooterButton>
              <FooterButton>-&gt; Excel</FooterButton>
              <FooterButton>Libere</FooterButton>
              <FooterButton $strong>Chiudi</FooterButton>
            </FooterButtons>
          </ReportFooter>
        </ReportBody>
      </ReportWindow>
    </Page>
  );
};

export default App;
